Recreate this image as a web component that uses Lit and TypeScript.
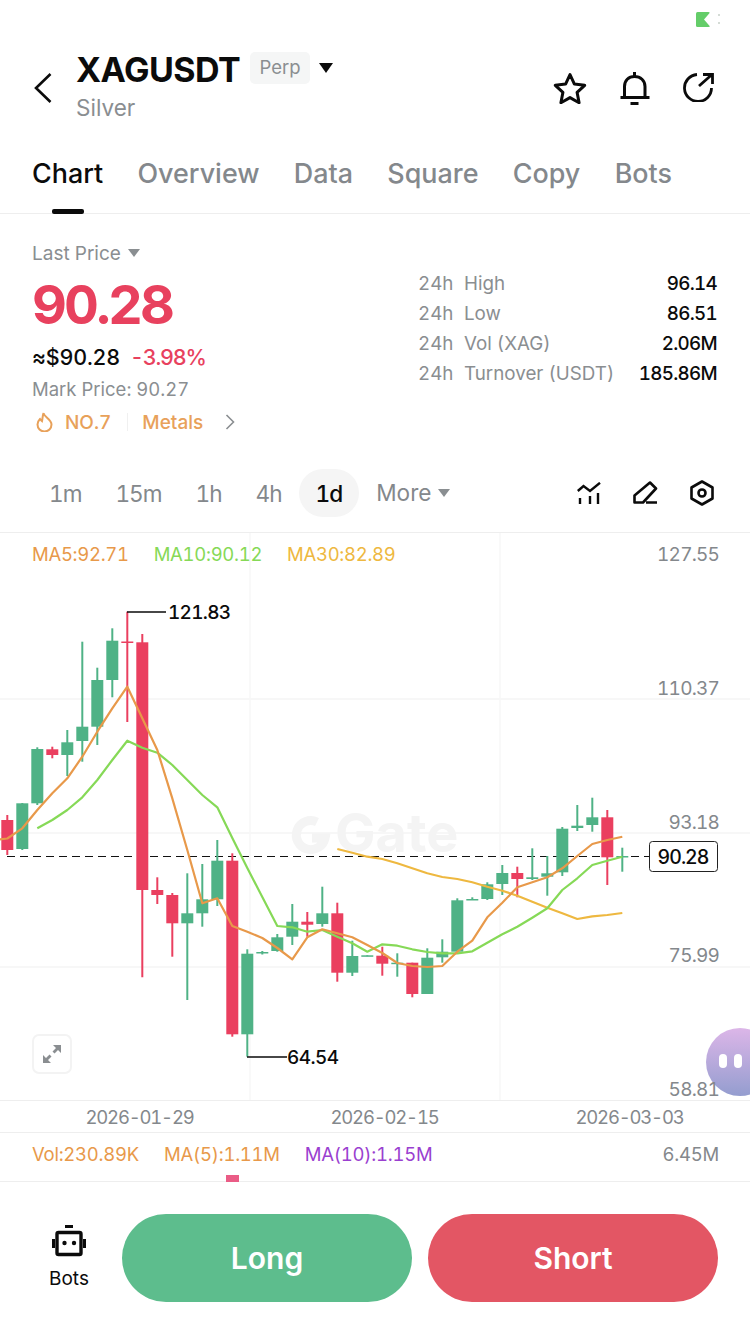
import { LitElement, css, html, svg } from 'lit';
import { customElement } from 'lit/decorators.js';

// [high, open/top, close/bottom, low, up] in page y, candles are 15px apart
const CANDLES: [number, number, number, number, number][] = [
  [815, 820, 850, 855, 0], [803, 803.3, 849, 850, 1], [747.3, 749, 803.3, 805, 1], [746.7, 749.3, 755, 758.3, 0],
  [730, 742.3, 755, 776, 1], [641.7, 726.7, 741, 761.7, 1], [667.7, 680, 726.7, 745, 1], [628.3, 640.7, 680, 697.3, 1],
  [611.7, 641.5, 642.5, 722, 0], [634, 642.3, 890, 977.3, 0], [877.3, 890, 895, 904, 0], [893, 895, 923.3, 956.7, 0],
  [873.3, 913.3, 923.3, 1000, 1], [864, 899.3, 913.3, 926.7, 1], [840, 860.7, 899.3, 906, 1], [853.3, 860.7, 1034.3, 1036.7, 0],
  [949.3, 953.7, 1034.3, 1056.7, 1], [951, 952, 953.3, 954.5, 1], [934, 937.3, 951, 951.7, 1], [904, 921.7, 936.7, 945, 1],
  [912, 921.7, 924.7, 936.7, 0], [886.7, 913.3, 924, 926.7, 1], [902.7, 913.3, 972.7, 981.7, 0], [940.7, 956, 972.7, 976, 1],
  [955.3, 955.3, 956.3, 956.3, 1], [946.7, 955.7, 963.7, 975.7, 0], [953.3, 962.7, 964, 976.7, 1], [962.7, 962.7, 994, 997.3, 0],
  [948.3, 957.7, 994, 994, 1], [939.3, 951.7, 957.3, 962.7, 1], [898.3, 900.3, 951.7, 951.7, 1], [897.3, 899, 900, 900, 1],
  [882.3, 884.3, 899, 900, 1], [865, 873, 884, 895, 1], [866.7, 873, 879, 897.3, 0], [848.3, 877.3, 879, 880, 1],
  [856, 873.3, 876.7, 895.7, 1], [827, 828.7, 872.3, 876, 1], [805, 825.7, 828, 831, 1], [797.7, 817.3, 825, 831.7, 1],
  [810, 817.3, 857.3, 885, 0], [847.7, 856, 857, 871.7, 1],
];

const MA5 = [[0, 839.3], [7.3, 838.5], [22.3, 828.3], [37.3, 810], [52.3, 793.3], [67.3, 778.3], [82.3, 756.7], [97.3, 731.7], [112.3, 708.3], [127.3, 686.7], [142.3, 718.3], [157.3, 750], [172.3, 798.3], [187.3, 850], [202.3, 903.3], [217.3, 898.3], [232.3, 926], [247.3, 931.7], [262.3, 938], [277.3, 948], [292.3, 959.3], [307.3, 937.3], [322.3, 929.3], [337.3, 933.3], [352.3, 937.3], [367.3, 945], [382.3, 953], [397.3, 963], [412.3, 966], [427.3, 967], [442.3, 966], [457.3, 951.7], [472.3, 940.7], [487.3, 917.3], [502.3, 902.7], [517.3, 887.3], [532.3, 882.3], [547.3, 877.3], [562.3, 868.3], [577.3, 856], [592.3, 844], [607.3, 840], [622.3, 836.7]];
const MA10 = [[37.3, 828.3], [52.3, 820], [67.3, 810], [82.3, 797.3], [97.3, 780], [112.3, 760], [127.3, 740.7], [142.3, 747.7], [157.3, 752.7], [172.3, 765], [187.3, 780], [202.3, 795], [217.3, 807.3], [232.3, 838], [247.3, 868], [262.3, 897], [277.3, 926], [292.3, 927.3], [307.3, 931.7], [322.3, 930], [337.3, 936.7], [352.3, 943.3], [367.3, 951.7], [382.3, 944.3], [397.3, 945.7], [412.3, 949.3], [427.3, 952], [442.3, 953.3], [457.3, 953.3], [472.3, 951.3], [487.3, 942.7], [502.3, 934.3], [517.3, 926.7], [532.3, 917.7], [547.3, 908.3], [562.3, 890], [577.3, 878.3], [592.3, 865], [607.3, 860.7], [622.3, 856.7]];
const MA30 = [[337.3, 849], [352.3, 852.7], [367.3, 856.7], [382.3, 859], [397.3, 863.3], [412.3, 868.3], [427.3, 873.3], [442.3, 877], [457.3, 879], [472.3, 882.3], [487.3, 886.7], [502.3, 890.7], [517.3, 895.7], [532.3, 901.7], [547.3, 907.7], [562.3, 913.3], [577.3, 919], [592.3, 916.3], [607.3, 915], [622.3, 913]];

const PRICES: [string, number][] = [['127.55', 554], ['110.37', 688], ['93.18', 822], ['75.99', 955], ['58.81', 1089]];
const STATS = [['High', '96.14'], ['Low', '86.51'], ['Vol (XAG)', '2.06M'], ['Turnover (USDT)', '185.86M']];

@customElement('app-root')
export class AppRoot extends LitElement {
  static styles = css`
    :host {
      display: block;
      position: relative;
      width: 750px;
      height: 1334px;
      overflow: hidden;
      background: #fff;
      color: #0b0b0b;
      font-family: Inter, "Liberation Sans", sans-serif;
      font-variant-numeric: tabular-nums;
    }
    svg { display: block; flex: none; }
    .status {
      height: 44px;
      box-sizing: border-box;
      display: flex;
      justify-content: flex-end;
      align-items: center;
      padding: 0 29px 5px 0;
    }
    .header {
      height: 88px;
      display: flex;
      align-items: center;
      padding: 0 36px 0 34px;
    }
    .title { margin: 0 0 10px 24px; flex: 1; }
    .title-row { display: flex; align-items: center; height: 50px; }
    .symbol { font-size: 34px; font-weight: 700; letter-spacing: -0.55px; }
    .perp {
      margin: -2px 0 0 10px;
      width: 60px;
      height: 32px;
      line-height: 30px;
      text-align: center;
      background: #f5f6f6;
      border-radius: 5px;
      color: #8a8e91;
      font-size: 18.5px;
    }
    .caret-big { margin: -2px 0 0 9px; }
    .silver { font-size: 22.5px; color: #8a8e91; line-height: 28px; }
    .actions { display: flex; align-items: center; gap: 33px; margin-top: -1px; }
    .tabs {
      position: relative;
      height: 82px;
      box-sizing: border-box;
      border-bottom: 1px solid #eeeeee;
      display: flex;
      gap: 34.3px;
      padding: 24px 0 0 32px;
      font-size: 26.9px;
      line-height: 34px;
      font-weight: 500;
      color: #84888c;
    }
    .tabs .on { color: #0b0b0b; }
    .tab-bar {
      position: absolute;
      left: 52px;
      bottom: -1px;
      width: 32px;
      height: 5px;
      border-radius: 2px;
      background: #0b0b0b;
    }
    .summary {
      height: 240px;
      box-sizing: border-box;
      display: flex;
      justify-content: space-between;
      padding: 24px 33px 0 32px;
    }
    .last { display: flex; align-items: center; gap: 7px; height: 30px; font-size: 19px; color: #8a8e91; }
    .price { height: 76px; line-height: 74px; font-size: 54px; font-weight: 700; color: #e8415e; letter-spacing: -2.8px; }
    .approx { height: 26px; line-height: 27px; font-size: 21.5px; font-weight: 500; display: flex; gap: 10px; letter-spacing: -0.2px; }
    .approx b { font-weight: 500; color: #e8415e; letter-spacing: -1.2px; }
    .mark { height: 36px; line-height: 38px; font-size: 18.5px; color: #8a8e91; }
    .hot { display: flex; align-items: center; height: 32px; font-size: 19px; font-weight: 500; color: #e8a15a; }
    .hot .sep { width: 1px; height: 18px; background: #f0f0f0; margin: 0 14px 0 16px; }
    .hot svg.hot-icon { margin: 0 12px 0 4px; }
    .hot svg.more { margin-left: 22px; }
    .stats {
      margin-top: 30px;
      width: 299px;
      display: grid;
      grid-template-columns: 46px 1fr auto;
      grid-auto-rows: 30px;
      align-items: center;
      font-size: 18.8px;
      color: #8a8e91;
    }
    .stats .val { color: #0b0b0b; text-align: right; font-weight: 500; letter-spacing: -0.7px; }
    .intervals {
      height: 79px;
      box-sizing: border-box;
      border-bottom: 1px solid #eeeeee;
      display: flex;
      padding: 15px 36px 0 32px;
      font-size: 22.6px;
      color: #84888c;
    }
    .iv {
      height: 48px;
      line-height: 50px;
      padding: 0 17px;
      border-radius: 24px;
      letter-spacing: -1px;
    }
    .iv.on { background: #f5f5f5; color: #0b0b0b; font-weight: 500; }
    .iv.more { display: flex; align-items: center; gap: 7px; padding-right: 0; letter-spacing: 0; }
    .tools { margin-left: auto; display: flex; gap: 32px; align-items: center; height: 48px; }
    .chart { position: relative; z-index: 1; height: 567px; }
    .legend {
      position: absolute;
      left: 32px;
      top: 9px;
      display: flex;
      gap: 25px;
      font-size: 18.5px;
      line-height: 24px;
      letter-spacing: -0.3px;
    }
    .expand {
      position: absolute;
      left: 32px;
      top: 501px;
      width: 40px;
      height: 40px;
      box-sizing: border-box;
      border: 2px solid #f3f3f3;
      border-radius: 7px;
      display: flex;
      align-items: center;
      justify-content: center;
      background: #fff;
    }
    .dates {
      height: 33px;
      box-sizing: border-box;
      border-top: 1px solid #eeeeee;
      border-bottom: 1px solid #eeeeee;
      display: grid;
      grid-template-columns: repeat(3, 245px);
      padding: 1px 0 0 17px;
      justify-items: center;
      align-items: center;
      font-size: 18.5px;
      letter-spacing: -1.2px;
      color: #84888c;
    }
    .vol {
      position: relative;
      height: 49px;
      box-sizing: border-box;
      border-bottom: 1px solid #eeeeee;
      display: flex;
      gap: 25px;
      padding: 9px 31px 0 32px;
      font-size: 18.5px;
      line-height: 24px;
      letter-spacing: -0.25px;
    }
    .vol .max { margin-left: auto; color: #84888c; }
    .vol-bar { position: absolute; left: 226px; bottom: -1px; width: 13px; height: 7px; background: #ea5c86; }
    .trade {
      display: flex;
      align-items: flex-start;
      padding: 32px 32px 0 0;
      gap: 16px;
    }
    .bots {
      width: 122px;
      box-sizing: border-box;
      margin-right: -16px;
      display: flex;
      flex-direction: column;
      align-items: center;
      font-size: 19px;
      padding: 11px 0 0 16px;
    }
    .bots span { margin-top: 10px; line-height: 24px; }
    .btn {
      width: 290px;
      height: 88px;
      border-radius: 44px;
      color: #fff;
      font-size: 30px;
      font-weight: 600;
      line-height: 88px;
      text-align: center;
    }
    .long { background: #5dbd8d; }
    .short { background: #e35664; }
    .blob {
      position: absolute;
      left: 706px;
      top: 1028px;
      width: 68px;
      height: 68px;
      border-radius: 50%;
      background: linear-gradient(180deg, #dcb6e8, #949dcf);
      display: flex;
      gap: 7px;
      padding: 26px 0 0 13px;
      box-sizing: border-box;
    }
    .blob i { width: 8px; height: 14px; border-radius: 4px; background: #fff; }
  `;

  private line(pts: number[][], color: string) {
    return svg`<polyline points=${pts.map((p) => p.join(',')).join(' ')} fill="none" stroke=${color} stroke-width="2.2" stroke-linejoin="round"/>`;
  }

  private chartSvg() {
    return svg`<svg width="750" height="567" viewBox="0 533 750 567" font-family="Inter, 'Liberation Sans', sans-serif">
      <path d="M0 699H750M0 833H750M0 967H750" stroke="#f5f5f5" stroke-width="1.5" fill="none"/>
      <path d="M250 533V1100M500 533V1100" stroke="#f8f8f8" stroke-width="1.5" fill="none"/>
      <path d="M317 822A14.500 14.500 0 1 0 325 838H312" fill="none" stroke="#f4f4f4" stroke-width="9"/>
      <text x="335" y="852" font-size="54" font-weight="700" fill="#f4f4f4">Gate</text>
      ${PRICES.map(([t, y]) => svg`<text x="719" y=${y + 7} text-anchor="end" font-size="19" letter-spacing="-0.8" fill="#84888c">${t}</text>`)}
      <path d="M7 856.500H649" stroke="#111" stroke-width="1" stroke-dasharray="8 5"/>
      ${CANDLES.map(([hi, top, bot, lo, up], i) => {
        const x = 7.3 + 15 * i;
        const c = up ? '#4fb286' : '#ea3f5f';
        return svg`<path d="M${x} ${hi}V${lo}" stroke=${c} stroke-width="2"/>
          <rect x=${x - 6} y=${top} width="12" height=${Math.max(bot - top, 1.5)} fill=${c}/>`;
      })}
      ${this.line(MA30, '#eeb840')}
      ${this.line(MA10, '#86d957')}
      ${this.line(MA5, '#e8994a')}
      <path d="M127 612H166M247 1057H287" stroke="#0b0b0b" stroke-width="1.5" fill="none"/>
      <text x="168" y="619" font-size="19" font-weight="500" letter-spacing="-0.7" fill="#0b0b0b">121.83</text>
      <text x="287" y="1064" font-size="19" font-weight="500" letter-spacing="-0.6" fill="#0b0b0b">64.54</text>
      <rect x="649.5" y="841.5" width="68" height="30" rx="3" fill="#fff" stroke="#222"/>
      <text x="683" y="864" text-anchor="middle" font-size="19.5" font-weight="500" letter-spacing="-1" fill="#0b0b0b">90.28</text>
    </svg>`;
  }

  render() {
    return html`
      <div class="status">
        <svg width="25" height="15" viewBox="0 0 25 15">
          <rect x="0" y="0" width="14" height="15" rx="1.5" fill="#64cd69"/>
          <path d="M14.500 0L8 7.500l6.500 7.500z" fill="#fff"/>
          <path d="M23 2v2M23 10v2" stroke="#d5dcd6" stroke-width="2"/>
        </svg>
      </div>

      <div class="header">
        <svg width="18" height="30" viewBox="0 0 18 30"><path d="M16.5 1L2 15l14.5 14" fill="none" stroke="#0b0b0b" stroke-width="2.6"/></svg>
        <div class="title">
          <div class="title-row">
            <span class="symbol">XAGUSDT</span>
            <span class="perp">Perp</span>
            <svg class="caret-big" width="14" height="10" viewBox="0 0 14 10"><path d="M0 0h14L7 10z" fill="#0b0b0b"/></svg>
          </div>
          <div class="silver">Silver</div>
        </div>
        <div class="actions">
          <svg width="34" height="32" viewBox="0 0 34 32"><path d="M17 2.5l4.4 9.6 10.3 1.2-7.6 7.1 2 10.3L17 25.6 7.9 30.7l2-10.3-7.6-7.1 10.3-1.2z" fill="none" stroke="#0b0b0b" stroke-width="3" stroke-linejoin="round"/></svg>
          <svg width="30" height="34" viewBox="0 0 30 34"><path d="M0.500 26.500h29M4.500 26V15.500C4.500 9.500 8.500 5.500 14.500 5.500s10.500 4 10.500 10V26M14.500 1v4.500M10.500 32.500h8" fill="none" stroke="#0b0b0b" stroke-width="3"/></svg>
          <svg width="31" height="29" viewBox="0 0 31 29"><path d="M14 1.500A13.500 13.500 0 1 0 28.500 15M16 13L29 1.500M20 1.500h9.500V11" fill="none" stroke="#0b0b0b" stroke-width="2.800"/></svg>
        </div>
      </div>

      <div class="tabs">
        <span class="on">Chart</span><span>Overview</span><span>Data</span><span>Square</span><span>Copy</span><span>Bots</span>
        <div class="tab-bar"></div>
      </div>

      <div class="summary">
        <div>
          <div class="last">Last Price <svg width="12" height="8" viewBox="0 0 12 8"><path d="M0 0h12L6 8z" fill="#8a8e91"/></svg></div>
          <div class="price">90.28</div>
          <div class="approx">≈$90.28 <b>-3.98%</b></div>
          <div class="mark">Mark Price: 90.27</div>
          <div class="hot">
            <svg class="hot-icon" width="17" height="20" viewBox="0 0 17 20"><path d="M7.500 1C8 5 15.500 7 15.500 12.500a7 7 0 0 1-14 0c0-3 1.500-4.500 2.500-5.500 1 1.500 1.500 1.500 2 2C6.500 7 6.500 4 7.500 1z" fill="none" stroke="#e8a15a" stroke-width="2"/></svg>
            NO.7<span class="sep"></span>Metals
            <svg class="more" width="10" height="16" viewBox="0 0 10 16"><path d="M1.500 1l7 7-7 7" fill="none" stroke="#8a8e91" stroke-width="1.600"/></svg>
          </div>
        </div>
        <div class="stats">
          ${STATS.map(([k, v]) => html`<span>24h</span><span>${k}</span><span class="val">${v}</span>`)}
        </div>
      </div>

      <div class="intervals">
        <span class="iv">1m</span><span class="iv">15m</span><span class="iv">1h</span><span class="iv">4h</span>
        <span class="iv on">1d</span>
        <span class="iv more">More <svg width="12" height="8" viewBox="0 0 12 8"><path d="M0 0h12L6 8z" fill="#8a8e91"/></svg></span>
        <div class="tools">
          <svg width="24" height="22" viewBox="0 0 24 22"><path d="M0.800 9L6.500 4 13 9 23 0.800M3 16v6M13 14v8M21 11v11" fill="none" stroke="#0b0b0b" stroke-width="2.400"/></svg>
          <svg width="25" height="24" viewBox="0 0 25 24"><path d="M1.500 21.500V14.500L17 1.500l6 6L10 21.500zM13 21.500h11" fill="none" stroke="#0b0b0b" stroke-width="2.600" stroke-linejoin="round"/></svg>
          <svg width="24" height="26" viewBox="0 0 24 26"><path d="M12 1.500l10.500 6v11L12 24.500 1.500 18.500v-11z" fill="none" stroke="#0b0b0b" stroke-width="2.600" stroke-linejoin="round"/><circle cx="12" cy="13" r="3.500" fill="none" stroke="#0b0b0b" stroke-width="2.600"/></svg>
        </div>
      </div>

      <div class="chart">
        ${this.chartSvg()}
        <div class="legend">
          <span style="color:#e8994a">MA5:92.71</span>
          <span style="color:#86d957">MA10:90.12</span>
          <span style="color:#eeb840">MA30:82.89</span>
        </div>
        <div class="expand">
          <svg width="20" height="20" viewBox="0 0 20 20"><path d="M11 1h8v8l-3-3-3.500 3.500-2-2L14 4zM9 19H1v-8l3 3 3.500-3.500 2 2L6 16z" fill="#8a8e91"/></svg>
        </div>
      </div>

      <div class="dates"><span>2026-01-29</span><span>2026-02-15</span><span>2026-03-03</span></div>

      <div class="vol">
        <span style="color:#e8994a">Vol:230.89K</span>
        <span style="color:#e8994a">MA(5):1.11M</span>
        <span style="color:#9a3fd0">MA(10):1.15M</span>
        <span class="max">6.45M</span>
        <div class="vol-bar"></div>
      </div>

      <div class="trade">
        <div class="bots">
          <svg width="34" height="32" viewBox="0 0 34 32"><path d="M13 1.500h8M1.500 14v9M32.500 14v9" stroke="#0b0b0b" stroke-width="3" fill="none"/><rect x="5" y="7.500" width="24" height="22" rx="1.500" fill="none" stroke="#0b0b0b" stroke-width="3.400"/><circle cx="12.500" cy="18" r="2.200" fill="#0b0b0b"/><circle cx="22" cy="18" r="2.200" fill="#0b0b0b"/></svg>
          <span>Bots</span>
        </div>
        <div class="btn long">Long</div>
        <div class="btn short">Short</div>
      </div>

      <div class="blob"><i></i><i></i></div>
    `;
  }
}
